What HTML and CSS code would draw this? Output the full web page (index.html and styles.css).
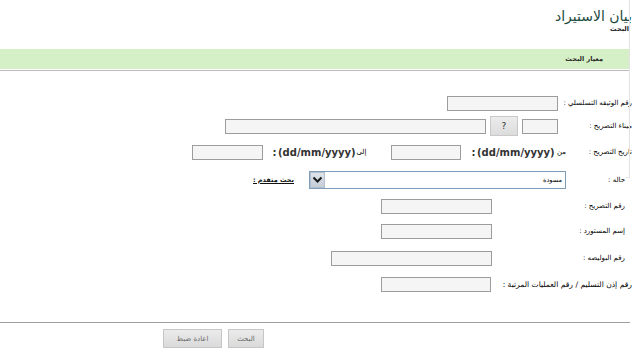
FILE: index.html
```html
<!DOCTYPE html>
<html lang="ar" dir="rtl">
<head>
<meta charset="utf-8">
<title>بيان الاستيراد</title>
<link rel="stylesheet" href="styles.css">
</head>
<body>
<div class="page">
  <div class="vline"></div>
  <header class="head">
    <h1 class="title">بيان الاستيراد</h1>
    <div class="sub">البحث</div>
  </header>
  <div class="band">معيار البحث</div>
  <div class="band-line"></div>

  <div class="form">
    <div class="row">
      <span class="lbl l-a">رقم الوثيقه التسلسلي :</span>
      <input class="in w111 mr2" type="text">
    </div>
    <div class="row">
      <span class="lbl l-a">ميناء التصريح :</span>
      <input class="in w36 mr2" type="text">
      <button class="q" type="button">?</button>
      <input class="in w261 mr4" type="text">
    </div>
    <div class="row">
      <span class="lbl l-b">تاريخ التصريح :</span>
      <span class="word w-from">من</span>
      <span class="fmt f1">(dd/mm/yyyy)</span>
      <span class="colon">:</span>
      <input class="in w70 mr9" type="text">
      <span class="word w-to">إلى</span>
      <span class="fmt f2">(dd/mm/yyyy)</span>
      <span class="colon">:</span>
      <input class="in w71 mr8" type="text">
    </div>
    <div class="row">
      <span class="lbl l-c">حاله :</span>
      <div class="select">
        <span class="opt">مسودة</span>
        <span class="arrow">
          <svg width="11" height="8" viewBox="0 0 11 8"><path d="M1.5 1.5 L5.5 5.5 L9.5 1.5" fill="none" stroke="#1a1a1a" stroke-width="2"/></svg>
        </span>
      </div>
      <a class="adv" href="#">بحث متقدم :</a>
    </div>
    <div class="row">
      <span class="lbl l-d">رقم التصريح :</span>
      <input class="in w111" type="text">
    </div>
    <div class="row">
      <span class="lbl l-d">إسم المستورد :</span>
      <input class="in w111" type="text">
    </div>
    <div class="row">
      <span class="lbl l-d">رقم البوليصه :</span>
      <input class="in w161" type="text">
    </div>
    <div class="row">
      <span class="lbl l-e">رقم إذن التسليم / رقم العمليات المرتبة :</span>
      <input class="in w110" type="text">
    </div>
  </div>

  <div class="sep"></div>
  <div class="actions">
    <button class="btn b-search" type="button">البحث</button>
    <button class="btn b-reset" type="button">اعادة ضبط</button>
  </div>
</div>
</body>
</html>
```
FILE: styles.css
```css
html, body {
  margin: 0;
  padding: 0;
  background: #fff;
}
body {
  direction: rtl;
  font-family: "DejaVu Sans", "Noto Sans", sans-serif;
  font-size: 7px;
  color: #000;
}
.page {
  position: relative;
  width: 634px;
  height: 360px;
  overflow: hidden;
}
.vline {
  position: absolute;
  left: 626px;
  top: 0;
  width: 3px;
  height: 177px;
  border-right: 1px solid #e2e2e2;
  border-bottom: 1px solid #e2e2e2;
}
.head {
  padding-right: 2px;
  padding-top: 7px;
}
.title {
  margin: 0;
  font-size: 14px;
  font-weight: normal;
  line-height: 18px;
  color: #1d4a3c;
}
.sub {
  font-size: 6.5px;
  font-weight: bold;
  line-height: 9px;
  padding-right: 3px;
  color: #222;
}
.band {
  margin-top: 15px;
  margin-right: 4px;
  height: 20px;
  line-height: 20px;
  background: #d5efc6;
  padding-right: 27px;
  font-size: 6.5px;
  font-weight: bold;
  color: #2a2a2a;
}
.band-line {
  margin-top: 1px;
  margin-right: 4px;
  height: 1px;
  background: #bdbdbd;
}
.form {
  margin-top: 20px;
  display: grid;
  grid-template-rows: 24px 22px 30px 26px 26px 24px 30px 22px;
}
.row {
  display: flex;
  align-items: center;
  white-space: nowrap;
}
.lbl {
  box-sizing: border-box;
  flex: none;
  font-size: 7px;
  color: #000;
}
.l-a { width: 74px; padding-right: 2px; }
.l-b { width: 66px; padding-right: 2px; }
.l-c { width: 68px; padding-right: 9px; }
.l-d { width: 142px; padding-right: 9px; }
.l-e { width: 143px; padding-right: 2px; font-size: 7.6px; }

.in {
  box-sizing: border-box;
  flex: none;
  height: 15px;
  margin: 0;
  padding: 0;
  border: 1px solid #9c9c9c;
  background: #f5f5f5;
  outline: none;
}
.w36 { width: 36px; }
.w70 { width: 70px; }
.w71 { width: 71px; }
.w110 { width: 110px; }
.w111 { width: 111px; }
.w161 { width: 161px; }
.w261 { width: 261px; }
.mr2 { margin-right: 2px; }
.mr4 { margin-right: 4px; }
.mr8 { margin-right: 8px; }
.mr9 { margin-right: 9px; }

.q {
  box-sizing: border-box;
  flex: none;
  width: 28px;
  height: 20px;
  margin: 0 4px 0 0;
  padding: 0;
  border: 1px solid #c9c9c9;
  background: linear-gradient(#ececec, #dcdcdc);
  font-family: "DejaVu Sans", sans-serif;
  font-size: 9px;
  color: #333;
}
.word {
  flex: none;
  box-sizing: border-box;
  text-align: center;
  font-size: 7px;
}
.w-from { width: 9px; margin-right: 2px; }
.w-to { width: 11px; margin-right: 24px; }
.fmt {
  flex: none;
  direction: ltr;
  unicode-bidi: isolate;
  text-align: center;
  width: 76px;
  font-size: 10px;
  font-weight: bold;
  color: #333;
}
.f1 { margin-right: 4px; }
.f2 { margin-right: 2px; }
.colon {
  flex: none;
  width: 7px;
  text-align: center;
  font-size: 10px;
  font-weight: bold;
  color: #333;
}

.select {
  box-sizing: border-box;
  flex: none;
  width: 257px;
  height: 18px;
  border: 1px solid #7f9db9;
  background: #fff;
  display: flex;
  align-items: stretch;
  justify-content: space-between;
}
.opt {
  padding-right: 3px;
  line-height: 16px;
  font-size: 6.5px;
}
.arrow {
  box-sizing: border-box;
  width: 15px;
  margin: 0;
  background: linear-gradient(#dfe4ea, #c4ccd6);
  border: 1px solid #b4bfcd;
  display: flex;
  align-items: center;
  justify-content: center;
}
.adv {
  margin-right: 15px;
  color: #111;
  font-size: 6.5px;
  font-weight: bold;
  text-decoration: underline;
}

.sep {
  margin-top: 27px;
  margin-right: 4px;
  height: 1px;
  background: #9f9f9f;
}
.actions {
  margin-top: 6px;
  padding-right: 370px;
  display: flex;
}
.btn {
  box-sizing: border-box;
  height: 19px;
  margin: 0;
  padding: 0;
  border: 1px solid #c6c6c6;
  background: linear-gradient(#ebebeb, #dadada);
  font-family: "DejaVu Sans", sans-serif;
  font-size: 7px;
  color: #666;
}
.b-search { width: 36px; }
.b-reset { width: 59px; margin-right: 6px; }
```
